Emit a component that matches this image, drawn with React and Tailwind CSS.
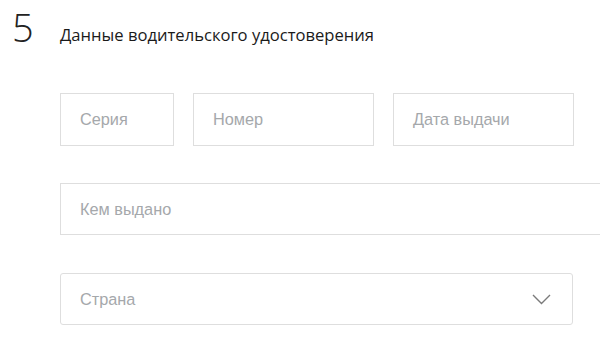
import React from "react";

const ph = "text-[16.3px] text-[#a5a8ab]";
const font = { fontFamily: '"Liberation Sans", Arial, sans-serif' };

export default function App() {
  return (
    <div className="w-[600px] h-[349px] bg-white overflow-hidden" style={font}>
      <div className="flex items-start h-[93px]">
        <div
          className="w-[60px] pl-[12px] pt-[7px] text-[38px] leading-[40px] text-[#222]"
          style={{ fontFamily: '"Open Sans", sans-serif', fontWeight: 300 }}
        >
          5
        </div>
        <div
          className="pt-[24px] text-[16.6px] leading-[22px] text-[#1a1a1a]"
          style={{ fontFamily: '"Open Sans", sans-serif' }}
        >
          Данные водительского удостоверения
        </div>
      </div>
      <div className="pl-[60px] flex flex-col">
        <div className="flex gap-[19px]">
          <div className={`w-[114px] h-[53px] border border-[#dedede] flex items-center pl-[19px] ${ph}`}>Серия</div>
          <div className={`w-[181px] h-[53px] border border-[#dedede] flex items-center pl-[19px] ${ph}`}>Номер</div>
          <div className={`w-[181px] h-[53px] border border-[#dedede] flex items-center pl-[19px] ${ph}`}>Дата выдачи</div>
        </div>
        <div className={`mt-[37px] w-[560px] h-[52px] border border-[#dedede] flex items-center pl-[19px] shrink-0 ${ph}`}>
          Кем выдано
        </div>
        <div className={`mt-[38px] w-[513px] h-[52px] border border-[#dedede] rounded-[3px] flex items-center justify-between pl-[19px] pr-[21px] ${ph}`}>
          <span>Страна</span>
          <svg width="19" height="11" viewBox="0 0 19 11" fill="none">
            <path d="M1 1L9.5 9.5L18 1" stroke="#7a7a7a" strokeWidth="1.4" />
          </svg>
        </div>
      </div>
    </div>
  );
}
